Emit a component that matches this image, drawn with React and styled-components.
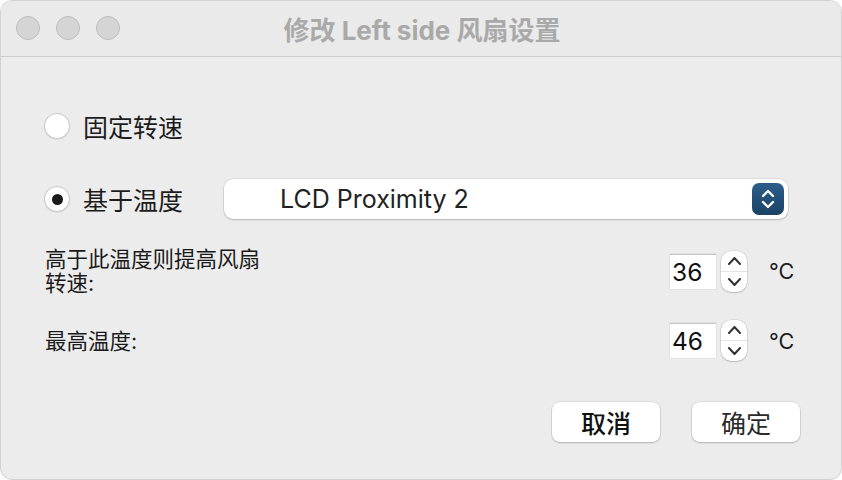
import styled, { createGlobalStyle } from "styled-components";

const GlobalStyle = createGlobalStyle`
  html, body {
    margin: 0;
    padding: 0;
    background: #ffffff;
  }
  body {
    font-family: Inter, "Noto Sans CJK SC", "Noto Sans", sans-serif;
    -webkit-font-smoothing: antialiased;
  }
`;

const Window = styled.div`
  width: 842px;
  height: 480px;
  box-sizing: border-box;
  background: #ececec;
  border-radius: 12px;
  border: 1px solid #d2d2d2;
  overflow: hidden;
  display: flex;
  flex-direction: column;
  color: #1c1c1c;
`;

const TitleBar = styled.div`
  position: relative;
  height: 55px;
  flex-shrink: 0;
  display: flex;
  align-items: center;
  justify-content: center;
  background: #eaeaea;
  border-bottom: 1px solid #cdcdcd;
`;

const Lights = styled.div`
  position: absolute;
  left: 15px;
  top: 15px;
  display: flex;
  gap: 16px;
`;

const Light = styled.span`
  width: 24px;
  height: 24px;
  box-sizing: border-box;
  border-radius: 50%;
  background: #d5d5d5;
  border: 1px solid #bdbdbd;
`;

const Title = styled.div`
  font-size: 26px;
  font-weight: 700;
  color: #a9a9a9;
  margin-left: 2px;
`;

const Body = styled.div`
  flex: 1;
  display: flex;
  flex-direction: column;
  padding: 0 41px 0 43px;
`;

const RadioRow = styled.div`
  display: flex;
  align-items: center;
  height: 40px;
  margin-top: ${(p) => p.$top}px;
`;

const RadioLabel = styled.label`
  display: flex;
  align-items: center;
  width: 180px;
  flex-shrink: 0;
  font-size: 25px;
  color: #1c1c1c;
`;

const RadioDot = styled.span`
  width: 26px;
  height: 26px;
  box-sizing: border-box;
  border-radius: 50%;
  background: #fff;
  border: 1px solid #cacaca;
  box-shadow: 0 0.5px 1px rgba(0, 0, 0, 0.12);
  margin-right: 13px;
  display: flex;
  align-items: center;
  justify-content: center;
  &::after {
    content: "";
    width: 11px;
    height: 11px;
    border-radius: 50%;
    background: ${(p) => (p.$checked ? "#1a1a1a" : "transparent")};
  }
`;

const Popup = styled.div`
  flex: 1;
  height: 40px;
  margin-right: 12px;
  box-sizing: border-box;
  background: #fff;
  border-radius: 9px;
  box-shadow: 0 0 0 0.5px rgba(0, 0, 0, 0.12), 0 1px 2px rgba(0, 0, 0, 0.18);
  display: flex;
  align-items: center;
  padding: 0 4px 0 56px;
`;

const PopupText = styled.span`
  flex: 1;
  font-size: 25px;
  color: #222;
`;

const PopupArrows = styled.span`
  width: 32px;
  height: 32px;
  border-radius: 7px;
  background: linear-gradient(#2c5e8a, #1b4266);
  display: flex;
  align-items: center;
  justify-content: center;
`;

const ValueRow = styled.div`
  display: flex;
  align-items: center;
  height: ${(p) => p.$height}px;
  margin-top: ${(p) => p.$top}px;
`;

const ValueLabel = styled.div`
  flex: 1;
  font-size: 21.5px;
  line-height: 24px;
  max-width: 232px;
  color: #1a1a1a;
  margin-left: 1px;
  margin-right: auto;
`;

const ValueBox = styled.div`
  margin-left: auto;
  width: 46px;
  height: 35px;
  box-sizing: border-box;
  background: #fff;
  border-top: 1px solid #c4c4c4;
  box-shadow: 0 0 0 0.5px rgba(0, 0, 0, 0.08);
  font-size: 24.5px;
  line-height: 34px;
  padding-left: 2px;
  color: #111;
`;

const Stepper = styled.div`
  width: 26px;
  height: 41px;
  margin-left: 5px;
  box-sizing: border-box;
  background: #fff;
  border-radius: 10px;
  box-shadow: 0 0 0 0.5px rgba(0, 0, 0, 0.14), 0 1px 1.5px rgba(0, 0, 0, 0.14);
  display: flex;
  flex-direction: column;
`;

const StepHalf = styled.div`
  flex: 1;
  display: flex;
  align-items: center;
  justify-content: center;
  & + & {
    border-top: 1px solid #e4e4e4;
  }
`;

const Unit = styled.div`
  width: 31px;
  margin-left: 22px;
  font-size: 21.5px;
  color: #1a1a1a;
`;

const Buttons = styled.div`
  display: flex;
  justify-content: flex-end;
  gap: 32px;
  margin-top: 41px;
`;

const Button = styled.button`
  width: 108px;
  height: 40px;
  border: none;
  border-radius: 8px;
  background: #fff;
  box-shadow: 0 0 0 0.5px rgba(0, 0, 0, 0.12), 0 1px 2px rgba(0, 0, 0, 0.2);
  font-family: inherit;
  font-size: 25px;
  font-weight: ${(p) => (p.$strong ? 500 : 400)};
  color: ${(p) => (p.$strong ? "#111" : "#2a2a2a")};
  padding: 0;
`;

function Chevron({ up, color = "#333", w = 11, h = 6, sw = 2 }) {
  return (
    <svg width={w + 2} height={h + 2} viewBox={`-1 -1 ${w + 2} ${h + 2}`}>
      <path
        d={up ? `M0 ${h} L${w / 2} 0 L${w} ${h}` : `M0 0 L${w / 2} ${h} L${w} 0`}
        fill="none"
        stroke={color}
        strokeWidth={sw}
        strokeLinecap="round"
        strokeLinejoin="round"
      />
    </svg>
  );
}

function NumberStepper({ value }) {
  return (
    <>
      <ValueBox>{value}</ValueBox>
      <Stepper>
        <StepHalf>
          <Chevron up />
        </StepHalf>
        <StepHalf>
          <Chevron />
        </StepHalf>
      </Stepper>
      <Unit>°C</Unit>
    </>
  );
}

export default function App() {
  return (
    <>
      <GlobalStyle />
      <Window>
        <TitleBar>
          <Lights>
            <Light />
            <Light />
            <Light />
          </Lights>
          <Title>修改 Left side 风扇设置</Title>
        </TitleBar>
        <Body>
          <RadioRow $top={49}>
            <RadioLabel>
              <RadioDot />
              固定转速
            </RadioLabel>
          </RadioRow>
          <RadioRow $top={33}>
            <RadioLabel>
              <RadioDot $checked />
              基于温度
            </RadioLabel>
            <Popup>
              <PopupText>LCD Proximity 2</PopupText>
              <PopupArrows>
                <svg width="16" height="22" viewBox="0 0 16 22">
                  <path
                    d="M3 8 L8 3 L13 8 M3 14 L8 19 L13 14"
                    fill="none"
                    stroke="#fff"
                    strokeWidth="2.4"
                    strokeLinecap="round"
                    strokeLinejoin="round"
                  />
                </svg>
              </PopupArrows>
            </Popup>
          </RadioRow>
          <ValueRow $top={28} $height={48}>
            <ValueLabel>高于此温度则提高风扇转速:</ValueLabel>
            <NumberStepper value="36" />
          </ValueRow>
          <ValueRow $top={25} $height={41}>
            <ValueLabel>最高温度:</ValueLabel>
            <NumberStepper value="46" />
          </ValueRow>
          <Buttons>
            <Button $strong>取消</Button>
            <Button>确定</Button>
          </Buttons>
        </Body>
      </Window>
    </>
  );
}
